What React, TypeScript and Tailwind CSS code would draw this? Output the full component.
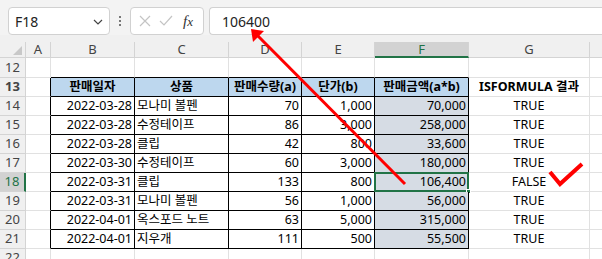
import React from "react";

const cols = [
  { key: "hdr", w: 26 },
  { key: "A", w: 25 },
  { key: "B", w: 84 },
  { key: "C", w: 94 },
  { key: "D", w: 73 },
  { key: "E", w: 73 },
  { key: "F", w: 94 },
  { key: "G", w: 121 },
  { key: "H", w: 40 },
];

const rows = [
  ["2022-03-28", "모나미 볼펜", "70", "1,000", "70,000", "TRUE"],
  ["2022-03-28", "수정테이프", "86", "3,000", "258,000", "TRUE"],
  ["2022-03-28", "클립", "42", "800", "33,600", "TRUE"],
  ["2022-03-30", "수정테이프", "60", "3,000", "180,000", "TRUE"],
  ["2022-03-31", "클립", "133", "800", "106,400", "FALSE"],
  ["2022-03-31", "모나미 볼펜", "56", "1,000", "56,000", "TRUE"],
  ["2022-04-01", "옥스포드 노트", "63", "5,000", "315,000", "TRUE"],
  ["2022-04-01", "지우개", "111", "500", "55,500", "TRUE"],
];

const font = "font-['Noto_Sans','Noto_Sans_CJK_KR',sans-serif]";

function RowHeader({ n, active, h }: { n: number; active?: boolean; h: string }) {
  return (
    <div
      className={`w-[26px] shrink-0 ${h} flex items-center justify-center text-[13px] border-b border-[#d4d4d4] ${
        active
          ? "bg-[#d2d2d2] text-[#217346] border-r-2 border-r-[#217346]"
          : "bg-[#f0f0f0] text-[#444] border-r border-r-[#d4d4d4]"
      }`}
    >
      {n}
    </div>
  );
}

function FormulaBar() {
  return (
    <div className={`h-[35px] bg-[#f3f3f3] flex items-start pt-[7px] ${font}`}>
      <div className="ml-[8px] w-[102px] h-[28px] bg-white border border-[#d1d1d1] rounded-[4px] flex items-center pl-[6px] pr-[6px] text-[14px] text-[#222]">
        <span className="flex-1">F18</span>
        <svg width="10" height="6" viewBox="0 0 10 6" className="mt-[1px]">
          <path d="M1 1 L5 5 L9 1" fill="none" stroke="#444" strokeWidth="1.2" />
        </svg>
      </div>
      <div className="w-[20px] h-[28px] flex flex-col items-center justify-center gap-[2px]">
        <div className="w-[2px] h-[2px] bg-[#777]" />
        <div className="w-[2px] h-[2px] bg-[#777]" />
        <div className="w-[2px] h-[2px] bg-[#777]" />
      </div>
      <div className="w-[74px] h-[28px] bg-white border border-[#d1d1d1] rounded-[4px] flex items-center pl-[8px] gap-[8px]">
        <svg width="12" height="12" viewBox="0 0 12 12">
          <path d="M1 1 L11 11 M11 1 L1 11" stroke="#c4c4c4" strokeWidth="1.2" />
        </svg>
        <svg width="14" height="12" viewBox="0 0 14 12">
          <path d="M1 6 L5 10 L13 1" fill="none" stroke="#c4c4c4" strokeWidth="1.2" />
        </svg>
        <span className="font-['Liberation_Serif',serif] italic text-[15px] text-[#333] leading-none ml-[2px]">
          f<span className="text-[13px]">x</span>
        </span>
      </div>
      <div className="ml-[5px] flex-1 h-[28px] bg-white border border-[#d1d1d1] border-r-0 rounded-l-[4px] flex items-center pl-[12px] text-[14px] text-[#222]">
        106400
      </div>
    </div>
  );
}

function ColumnHeaders() {
  return (
    <div className={`flex h-[23px] bg-[#f0f0f0] ${font}`}>
      <div className="w-[26px] shrink-0 flex flex-col">
        <div className="h-[7px]" />
        <div className="h-[16px] border-r border-b border-[#d4d4d4] relative">
          <svg width="9" height="9" viewBox="0 0 9 9" className="absolute right-[3px] bottom-[2px]">
            <path d="M9 0 L9 9 L0 9 Z" fill="#c8c8c8" />
          </svg>
        </div>
      </div>
      {cols.slice(1).map((c) => (
        <div key={c.key} style={{ width: c.w }} className="shrink-0 flex flex-col">
          <div className="h-[7px]" />
          {c.key === "F" ? (
            <div className="h-[16px] bg-[#d2d2d2] border-b-2 border-[#217346] border-r border-r-[#d4d4d4] flex items-center justify-center text-[13px] text-[#217346] leading-none">
              F
            </div>
          ) : (
            <div className="h-[16px] border-r border-b border-[#d4d4d4] flex items-center justify-center text-[13px] text-[#444] leading-none">
              {c.key === "H" ? "" : c.key}
            </div>
          )}
        </div>
      ))}
    </div>
  );
}

function Cell({
  w,
  children,
  className = "",
}: {
  w: number;
  children?: React.ReactNode;
  className?: string;
}) {
  return (
    <div
      style={{ width: w }}
      className={`shrink-0 h-full border-r border-b flex items-center px-[2px] whitespace-nowrap overflow-hidden ${className}`}
    >
      {children}
    </div>
  );
}

export default function App() {
  const grid = "border-[#e1e1e1]";
  const blk = "border-black";
  return (
    <div className={`relative w-[602px] h-[259px] overflow-hidden bg-white ${font}`}>
      <FormulaBar />
      <ColumnHeaders />

      {/* row 12 */}
      <div className="flex h-[20px] text-[12.5px]">
        <RowHeader n={12} h="h-[20px]" />
        <Cell w={25} className={grid} />
        <Cell w={84} className={`border-r-[#e1e1e1] border-b-black`} />
        <Cell w={94} className={`border-r-[#e1e1e1] border-b-black`} />
        <Cell w={73} className={`border-r-[#e1e1e1] border-b-black`} />
        <Cell w={73} className={`border-r-[#e1e1e1] border-b-black`} />
        <Cell w={94} className={`border-r-[#e1e1e1] border-b-black`} />
        <Cell w={121} className={grid} />
        <Cell w={40} className={grid} />
      </div>

      {/* row 13 header */}
      <div className="flex h-[19px] text-[12.5px] text-black font-bold">
        <RowHeader n={13} h="h-[19px]" />
        <Cell w={25} className={`border-r-black border-b-[#e1e1e1]`} />
        <Cell w={84} className={`${blk} bg-[#bdd7ee] justify-center`}>판매일자</Cell>
        <Cell w={94} className={`${blk} bg-[#bdd7ee] justify-center`}>상품</Cell>
        <Cell w={73} className={`${blk} bg-[#bdd7ee] justify-center`}>판매수량(a)</Cell>
        <Cell w={73} className={`${blk} bg-[#bdd7ee] justify-center`}>단가(b)</Cell>
        <Cell w={94} className={`${blk} bg-[#bdd7ee] justify-center`}>판매금액(a*b)</Cell>
        <Cell w={121} className={`${grid} justify-center`}>ISFORMULA 결과</Cell>
        <Cell w={40} className={grid} />
      </div>

      {rows.map((r, i) => {
        const n = 14 + i;
        const active = n === 18;
        return (
          <div key={n} className="flex h-[19px] text-[12.5px] text-black">
            <RowHeader n={n} h="h-[19px]" active={active} />
            <Cell w={25} className={`border-r-black border-b-[#e1e1e1]`} />
            <Cell w={84} className={`${blk} justify-end`}>{r[0]}</Cell>
            <Cell w={94} className={`${blk} justify-start`}>{r[1]}</Cell>
            <Cell w={73} className={`${blk} justify-end`}>{r[2]}</Cell>
            <Cell w={73} className={`${blk} justify-end`}>{r[3]}</Cell>
            <Cell w={94} className={`${blk} bg-[#d6dce4] justify-end relative overflow-visible`}>
              {r[4]}
              {active && (
                <div className="absolute left-[-1px] top-[-1px] right-[-1px] bottom-[-1px] border-2 border-[#217346]">
                  <div className="absolute right-[-4px] bottom-[-4px] w-[5px] h-[5px] bg-[#217346] border border-white" />
                </div>
              )}
            </Cell>
            <Cell w={121} className={`${grid} justify-center`}>{r[5]}</Cell>
            <Cell w={40} className={grid} />
          </div>
        );
      })}

      {/* row 22 */}
      <div className="flex h-[19px] text-[12.5px]">
        <RowHeader n={22} h="h-[19px]" />
        <Cell w={25} className={grid} />
        <Cell w={84} className={grid} />
        <Cell w={94} className={grid} />
        <Cell w={73} className={grid} />
        <Cell w={73} className={grid} />
        <Cell w={94} className={`${grid} bg-[#d6dce4]/0`} />
        <Cell w={121} className={grid} />
        <Cell w={40} className={grid} />
      </div>

      {/* annotations */}
      <svg
        className="absolute left-0 top-0 pointer-events-none"
        width="602"
        height="259"
        viewBox="0 0 602 259"
      >
        <line x1="405" y1="184" x2="258" y2="36" stroke="#ff0000" strokeWidth="3" />
        <path d="M251 29 L264 31 L253 42 Z" fill="#ff0000" />
        <path d="M550 172 L560 184 L582 164" fill="none" stroke="#ff0000" strokeWidth="4" />
      </svg>
    </div>
  );
}
